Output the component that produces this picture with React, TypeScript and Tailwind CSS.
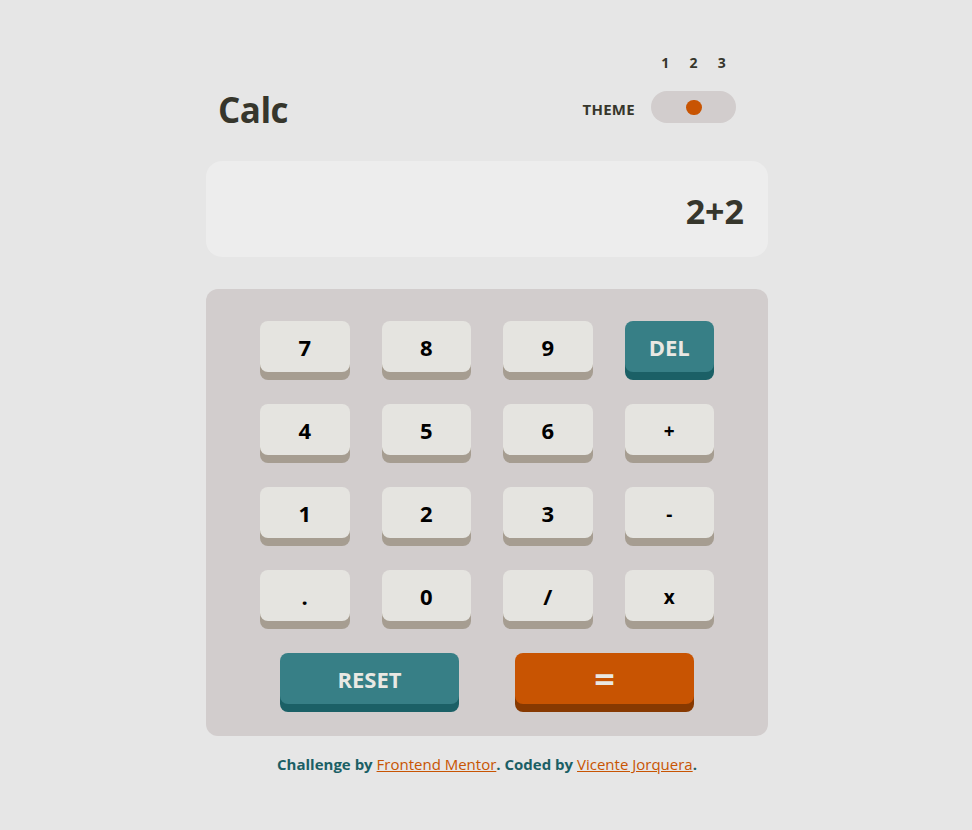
import React from "react";

type Key = {
  label: string,
  kind: "num" | "op" | "del"
}

const keys: Key[] = [
  { label: "7", kind: "num" },
  { label: "8", kind: "num" },
  { label: "9", kind: "num" },
  { label: "DEL", kind: "del" },
  { label: "4", kind: "num" },
  { label: "5", kind: "num" },
  { label: "6", kind: "num" },
  { label: "+", kind: "op" },
  { label: "1", kind: "num" },
  { label: "2", kind: "num" },
  { label: "3", kind: "num" },
  { label: "-", kind: "op" },
  { label: ".", kind: "num" },
  { label: "0", kind: "num" },
  { label: "/", kind: "num" },
  { label: "x", kind: "op" },
];

function KeyButton({ k }: { k: Key }) {
  if (k.kind === "del") {
    return (
      <button className="h-[51px] rounded-lg bg-[#377f86] shadow-[0_8px_0_#1b6066] text-[22px] font-bold text-[#e9e8e3] leading-none">
        {k.label}
      </button>
    )
  }
  return (
    <button className={`h-[51px] rounded-lg bg-[#e5e4e0] shadow-[0_8px_0_#a69d91] font-bold text-black leading-none ${k.kind === "op" ? "text-[19px] pt-1" : "text-[22px]"}`}>
      {k.label}
    </button>
  )
}

export default function App() {
  return (
    <div className="min-h-[830px] w-full bg-[#e6e6e6] font-['Open_Sans',sans-serif] text-[#36362c]">
      <main className="w-[562px] mx-auto pt-[53px] flex flex-col translate-x-px">
        {/* header */}
        <div className="flex flex-col">
          <div className="flex justify-end pr-8">
            <div className="grid grid-cols-3 w-[85px] text-center text-sm font-bold leading-5">
              <span>1</span>
              <span>2</span>
              <span>3</span>
            </div>
          </div>
          <div className="flex flex-row items-center justify-between pl-3 pr-8 mt-[14px] h-10">
            <h1 className="text-[35px] font-bold leading-10 mt-[3px] -mb-[3px] tracking-[-0.5px]">Calc</h1>
            <div className="flex flex-row items-center gap-4">
              <span className="text-[15px] font-bold uppercase tracking-[0.3px] mt-1">Theme</span>
              <div className="w-[85px] h-8 rounded-full bg-[#d2cdcd] flex items-center justify-center">
                <div className="w-4 h-[15px] rounded-full bg-[#c85402]"></div>
              </div>
            </div>
          </div>
        </div>

        {/* display */}
        <div className="mt-[34px] h-[96px] rounded-2xl bg-[#ededed] flex items-center justify-end pr-6">
          <span className="text-[34px] font-bold leading-none mt-1">2+2</span>
        </div>

        {/* keypad */}
        <div className="mt-8 rounded-xl bg-[#d2cdcd] px-[54px] py-8 flex flex-col gap-y-8">
          <div className="grid grid-cols-4 gap-x-8 gap-y-8">
            {keys.map(k => <KeyButton key={k.label} k={k} />)}
          </div>
          <div className="grid grid-cols-2 gap-x-14 px-5">
            <button className="h-[51px] rounded-lg bg-[#377f86] shadow-[0_8px_0_#1b6066] text-[22px] font-bold text-[#e9e8e3] leading-none">
              RESET
            </button>
            <button className="h-[51px] rounded-lg bg-[#c85402] shadow-[0_8px_0_#873901] text-[36px] font-bold text-[#e9e8e3] leading-none">
              =
            </button>
          </div>
        </div>

        <p className="mt-[17px] text-center text-[15px] font-bold text-[#1b5f65]">
          Challenge by <a href="#" className="font-normal text-[#c85402] underline">Frontend Mentor</a>. Coded by <a href="#" className="font-normal text-[#c85402] underline">Vicente Jorquera</a>.
        </p>
      </main>
    </div>
  )
}
